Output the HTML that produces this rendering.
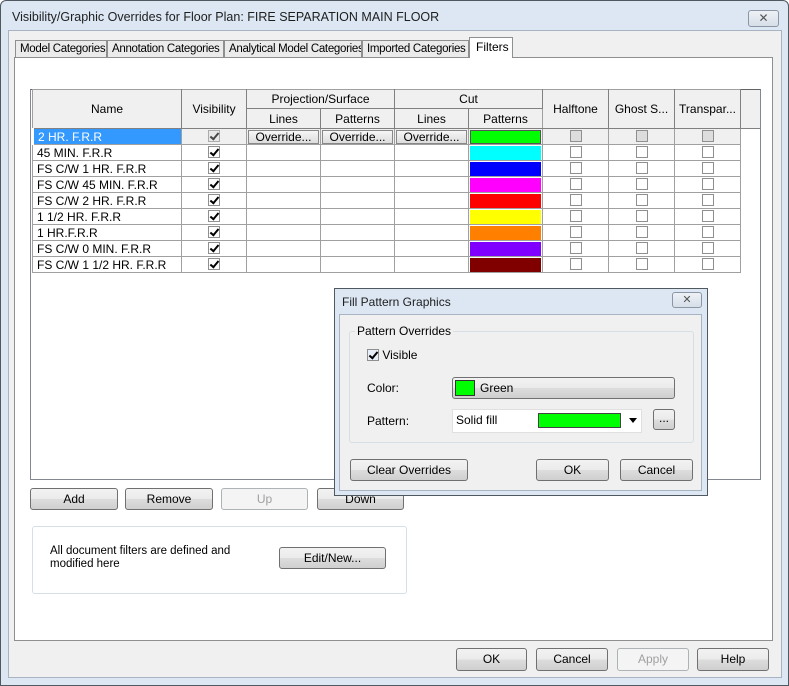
<!DOCTYPE html>
<html><head><style>
*{box-sizing:border-box;margin:0;padding:0}
body{width:789px;height:686px;overflow:hidden;font:12px "Liberation Sans",sans-serif;color:#000;background:#fff;position:relative;white-space:nowrap}
.a{position:absolute}
.btn{position:absolute;border:1px solid #707070;border-radius:3px;background:linear-gradient(#f2f2f2 0,#ebebeb 50%,#dddddd 51%,#cfcfcf 100%);text-align:center;font-size:12px;line-height:20px}
.dis{border-color:#adb2b5;color:#a0a0a0;background:#f4f4f4}
table{border-collapse:collapse;table-layout:fixed}
td,th{border:1px solid #a0a0a0;height:16px;padding:0;font-weight:normal;font-size:12px;white-space:nowrap;overflow:hidden}
th{background:#f0f0f0;border-color:#a0a0a0 #808080 #808080 #a0a0a0}
.cb{display:inline-block;width:12px;height:12px;border:1px solid #8f8f8f;background:#fff;vertical-align:middle;position:relative;top:-1px}
.ck::after{content:"";position:absolute;left:3px;top:0px;width:3px;height:7px;border:solid #000;border-width:0 2px 2px 0;transform:rotate(40deg)}
.c{text-align:center}
.n{padding-left:4px}
.ov{display:block;margin:0 1px;height:14px;line-height:13px;border:1px solid #888;background:linear-gradient(#f6f6f6,#dcdcdc);text-align:center}
.sw{display:block;height:14px;margin:0 1px}
.tab{position:absolute;top:40px;height:18px;border:1px solid #8e8f8f;background:#ebebeb;line-height:16px;padding-left:4px;font-size:11.5px;letter-spacing:-0.3px;overflow:hidden}
</style></head><body>
<div class="a" style="left:0;top:0;width:789px;height:686px;border:1px solid #505860;border-radius:6px 6px 0 0;background:#dce7f3"></div>
<div class="a" style="left:12px;top:10px;font-size:12.5px;color:#1e1e1e">Visibility/Graphic Overrides for Floor Plan: FIRE SEPARATION MAIN FLOOR</div>
<div class="a" style="left:748px;top:10px;width:31px;height:17px;border:1px solid #8a96a6;border-radius:3px;background:linear-gradient(#eef2f7,#d6dee8);text-align:center;line-height:15px;color:#555;font-size:12px">✕</div>
<div class="a" style="left:8px;top:30px;width:774px;height:648px;background:#f0f0f0;border:1px solid #a8b4c2"></div>
<div class="a" style="left:14px;top:57px;width:759px;height:584px;background:#fff;border:1px solid #8e8f8f"></div>
<div class="tab" style="left:15px;width:92px">Model Categories</div>
<div class="tab" style="left:107px;width:117px">Annotation Categories</div>
<div class="tab" style="left:224px;width:138px">Analytical Model Categories</div>
<div class="tab" style="left:362px;width:107px">Imported Categories</div>
<div class="a" style="left:469px;top:37px;width:44px;height:21px;border:1px solid #8e8f8f;border-bottom:none;background:#fff;line-height:18px;padding-left:6px">Filters</div>
<div class="a" style="left:30px;top:89px;width:731px;height:391px;border:1px solid #828790;border-top-color:#646464;background:#fff"></div>
<div class="a" style="left:739px;top:90px;width:21px;height:39px;background:#f0f0f0;border-bottom:1px solid #808080"></div>
<table class="a" style="left:31px;top:89px;width:708px">
<colgroup><col style="width:149px"><col style="width:65px"><col style="width:74px"><col style="width:74px"><col style="width:74px"><col style="width:74px"><col style="width:66px"><col style="width:66px"><col style="width:66px"></colgroup>
<tr><th rowspan="2" style="height:39px">Name</th><th rowspan="2">Visibility</th><th colspan="2" style="height:19px">Projection/Surface</th><th colspan="2">Cut</th><th rowspan="2">Halftone</th><th rowspan="2">Ghost S...</th><th rowspan="2">Transpar...</th></tr>
<tr><th style="height:20px">Lines</th><th>Patterns</th><th>Lines</th><th>Patterns</th></tr>
<tr style="background:#f0f0f0"><td class="n" style="background:#3399ff;color:#fff;border-left:3px solid #fff">2 HR. F.R.R</td><td class="c"><span class="cb ck" style="background:#e6e6e6;opacity:.7"></span></td><td><span class="ov">Override...</span></td><td><span class="ov">Override...</span></td><td><span class="ov">Override...</span></td><td><span class="sw" style="background:#00ff00;border:1px solid #555"></span></td><td class="c"><span class="cb" style="background:#ddd"></span></td><td class="c"><span class="cb" style="background:#ddd"></span></td><td class="c"><span class="cb" style="background:#ddd"></span></td></tr>
<tr><td class="n">45 MIN. F.R.R</td><td class="c"><span class="cb ck"></span></td><td></td><td></td><td></td><td><span class="sw" style="background:#00ffff"></span></td><td class="c"><span class="cb"></span></td><td class="c"><span class="cb"></span></td><td class="c"><span class="cb"></span></td></tr>
<tr><td class="n">FS C/W 1 HR. F.R.R</td><td class="c"><span class="cb ck"></span></td><td></td><td></td><td></td><td><span class="sw" style="background:#0000ff"></span></td><td class="c"><span class="cb"></span></td><td class="c"><span class="cb"></span></td><td class="c"><span class="cb"></span></td></tr>
<tr><td class="n">FS C/W 45 MIN. F.R.R</td><td class="c"><span class="cb ck"></span></td><td></td><td></td><td></td><td><span class="sw" style="background:#ff00ff"></span></td><td class="c"><span class="cb"></span></td><td class="c"><span class="cb"></span></td><td class="c"><span class="cb"></span></td></tr>
<tr><td class="n">FS C/W 2 HR. F.R.R</td><td class="c"><span class="cb ck"></span></td><td></td><td></td><td></td><td><span class="sw" style="background:#ff0000"></span></td><td class="c"><span class="cb"></span></td><td class="c"><span class="cb"></span></td><td class="c"><span class="cb"></span></td></tr>
<tr><td class="n">1 1/2 HR. F.R.R</td><td class="c"><span class="cb ck"></span></td><td></td><td></td><td></td><td><span class="sw" style="background:#ffff00"></span></td><td class="c"><span class="cb"></span></td><td class="c"><span class="cb"></span></td><td class="c"><span class="cb"></span></td></tr>
<tr><td class="n">1 HR.F.R.R</td><td class="c"><span class="cb ck"></span></td><td></td><td></td><td></td><td><span class="sw" style="background:#ff8000"></span></td><td class="c"><span class="cb"></span></td><td class="c"><span class="cb"></span></td><td class="c"><span class="cb"></span></td></tr>
<tr><td class="n">FS C/W 0 MIN. F.R.R</td><td class="c"><span class="cb ck"></span></td><td></td><td></td><td></td><td><span class="sw" style="background:#8000ff"></span></td><td class="c"><span class="cb"></span></td><td class="c"><span class="cb"></span></td><td class="c"><span class="cb"></span></td></tr>
<tr><td class="n">FS C/W 1 1/2 HR. F.R.R</td><td class="c"><span class="cb ck"></span></td><td></td><td></td><td></td><td><span class="sw" style="background:#800000"></span></td><td class="c"><span class="cb"></span></td><td class="c"><span class="cb"></span></td><td class="c"><span class="cb"></span></td></tr>
</table>
<div class="btn" style="left:30px;top:488px;width:88px;height:22px">Add</div>
<div class="btn" style="left:125px;top:488px;width:88px;height:22px">Remove</div>
<div class="btn dis" style="left:221px;top:488px;width:87px;height:22px">Up</div>
<div class="btn" style="left:317px;top:488px;width:87px;height:22px">Down</div>
<div class="a" style="left:32px;top:526px;width:375px;height:68px;border:1px solid #d5dfe5;border-radius:3px"></div>
<div class="a" style="left:50px;top:545px;line-height:13px;font-size:11.5px">All document filters are defined and<br>modified here</div>
<div class="btn" style="left:279px;top:547px;width:107px;height:22px">Edit/New...</div>
<div class="btn" style="left:456px;top:648px;width:71px;height:23px">OK</div>
<div class="btn" style="left:536px;top:648px;width:72px;height:23px">Cancel</div>
<div class="btn dis" style="left:617px;top:648px;width:72px;height:23px">Apply</div>
<div class="btn" style="left:697px;top:648px;width:72px;height:23px">Help</div>
<div class="a" style="left:334px;top:288px;width:374px;height:208px;border:1px solid #505860;background:#dce7f3"></div>
<div class="a" style="left:342px;top:295px;color:#1e1e1e">Fill Pattern Graphics</div>
<div class="a" style="left:672px;top:292px;width:30px;height:16px;border:1px solid #8a96a6;border-radius:3px;background:linear-gradient(#eef2f7,#d6dee8);text-align:center;line-height:14px;color:#555;font-size:11px">✕</div>
<div class="a" style="left:339px;top:314px;width:363px;height:177px;background:#f0f0f0;border:1px solid #a8b4c2"></div>
<div class="a" style="left:349px;top:331px;width:345px;height:112px;border:1px solid #d5dfe5;border-radius:3px"></div>
<div class="a" style="left:355px;top:324px;background:#f0f0f0;padding:0 2px">Pattern Overrides</div>
<div class="a" style="left:367px;top:348px"><span class="cb ck" style="background:#e8eef8;border-color:#8f8f8f"></span> Visible</div>
<div class="a" style="left:367px;top:381px">Color:</div>
<div class="btn" style="left:452px;top:377px;width:223px;height:22px;text-align:left;padding-left:27px;line-height:20px">Green</div>
<div class="a" style="left:455px;top:380px;width:20px;height:16px;background:#00ff00;border:1px solid #333"></div>
<div class="a" style="left:367px;top:414px">Pattern:</div>
<div class="a" style="left:452px;top:409px;width:190px;height:24px;background:#fff;border:1px solid #e0e0e0;padding:3px 0 0 3px">Solid fill</div>
<div class="a" style="left:538px;top:413px;width:83px;height:15px;background:#00ff00;border:1px solid #444"></div>
<div class="a" style="left:629px;top:418px;border:4px solid transparent;border-top:5px solid #000"></div>
<div class="btn" style="left:653px;top:409px;width:22px;height:21px;line-height:17px">...</div>
<div class="btn" style="left:350px;top:459px;width:118px;height:22px">Clear Overrides</div>
<div class="btn" style="left:536px;top:459px;width:73px;height:22px">OK</div>
<div class="btn" style="left:620px;top:459px;width:73px;height:22px">Cancel</div>
</body></html>
